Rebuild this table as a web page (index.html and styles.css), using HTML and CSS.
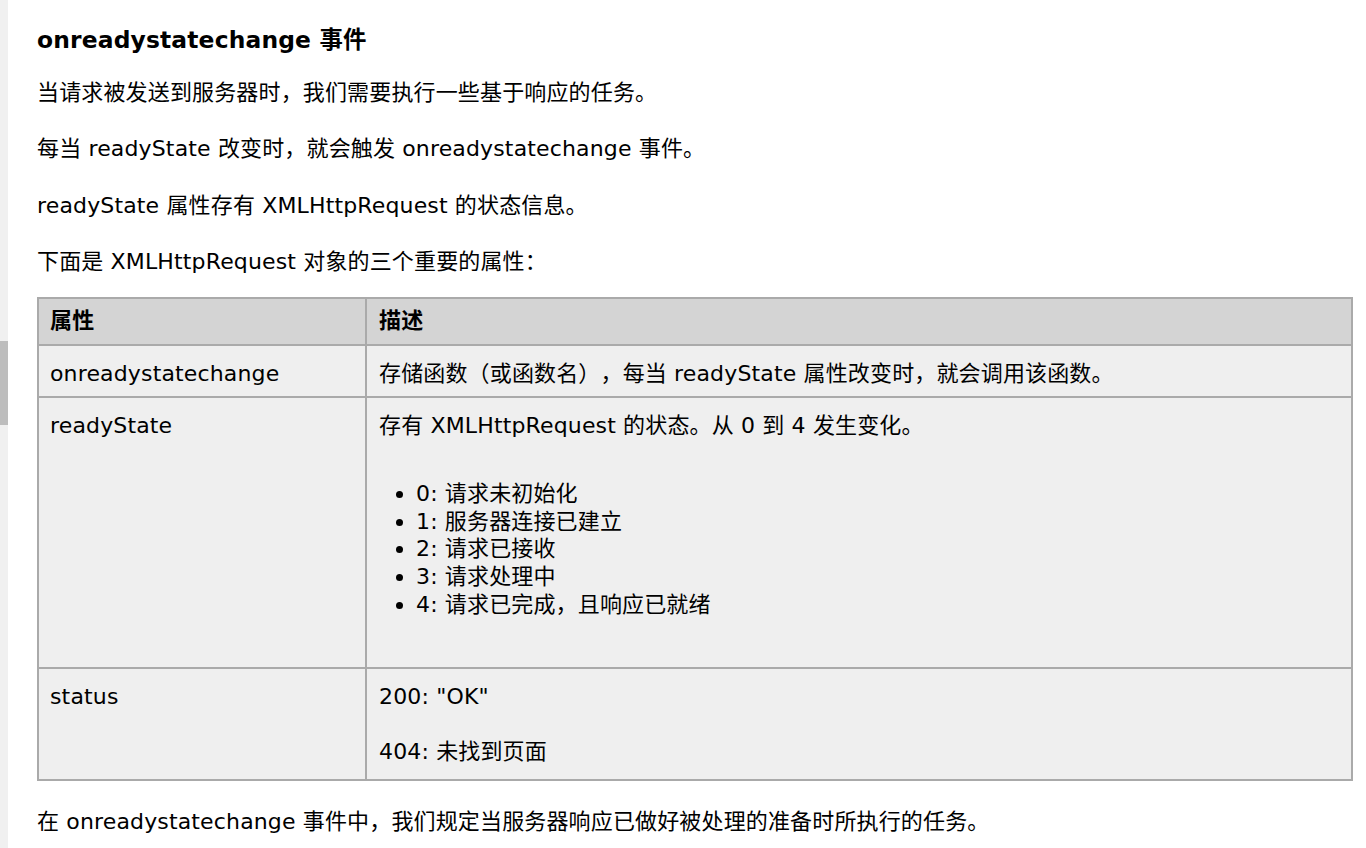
FILE: index.html
```html
<!DOCTYPE html>
<html lang="zh-CN">
<head>
<meta charset="utf-8">
<title>onreadystatechange 事件</title>
<link rel="stylesheet" href="styles.css">
</head>
<body>
<div class="page">
  <div class="rail"><div class="thumb"></div></div>
  <main class="content">
    <h2 class="title">onreadystatechange 事件</h2>
    <p class="para">当请求被发送到服务器时，我们需要执行一些基于响应的任务。</p>
    <p class="para">每当 readyState 改变时，就会触发 onreadystatechange 事件。</p>
    <p class="para">readyState 属性存有 XMLHttpRequest 的状态信息。</p>
    <p class="para last">下面是 XMLHttpRequest 对象的三个重要的属性：</p>
    <table class="ref">
      <colgroup><col class="c1"><col class="c2"></colgroup>
      <tr>
        <th class="first">属性</th>
        <th class="second">描述</th>
      </tr>
      <tr>
        <td class="first">onreadystatechange</td>
        <td class="second">存储函数（或函数名），每当 readyState 属性改变时，就会调用该函数。</td>
      </tr>
      <tr>
        <td class="first">readyState</td>
        <td class="second">
          <p class="cellp">存有 XMLHttpRequest 的状态。从 0 到 4 发生变化。</p>
          <ul class="states">
            <li>0: 请求未初始化</li>
            <li>1: 服务器连接已建立</li>
            <li>2: 请求已接收</li>
            <li>3: 请求处理中</li>
            <li>4: 请求已完成，且响应已就绪</li>
          </ul>
        </td>
      </tr>
      <tr>
        <td class="first">status</td>
        <td class="second">
          <p class="cellp">200: "OK"</p>
          <p class="cellp second-p">404: 未找到页面</p>
        </td>
      </tr>
    </table>
    <p class="para after">在 onreadystatechange 事件中，我们规定当服务器响应已做好被处理的准备时所执行的任务。</p>
  </main>
</div>
</body>
</html>
```
FILE: styles.css
```css
html, body {
  margin: 0;
  padding: 0;
  background: #ffffff;
}

body {
  font-family: "DejaVu Sans", "Noto Sans CJK SC", sans-serif;
  font-size: 22px;
  line-height: 28px;
  letter-spacing: 0.15px;
  color: #000000;
  text-spacing-trim: space-all;
  font-feature-settings: "halt" 0;
}

.page {
  display: flex;
  min-height: 848px;
}

.rail {
  width: 8px;
  flex: 0 0 8px;
  background: #f0f0f0;
}

.thumb {
  margin-top: 341px;
  height: 84px;
  background: #bdbdbd;
}

.content {
  padding: 26px 0 0 29px;
  width: 1316px;
}

.title {
  margin: 0 0 25px 0;
  font-size: 23.4px;
  line-height: 28px;
  font-weight: bold;
}

.para {
  margin: 0 0 28.3px 0;
}

.para.last {
  margin-bottom: 21px;
}

.para.after {
  margin-top: 27px;
}

.ref {
  width: 1316px;
  table-layout: fixed;
  border-collapse: separate;
  border-spacing: 0;
  border: 2px solid #aaaaaa;
}

.c1 {
  width: 326px;
}

.ref th,
.ref td {
  text-align: left;
  vertical-align: top;
  padding: 14px 12px 8px 12px;
  background: #efefef;
  border-top: 2px solid #aaaaaa;
}

.ref th {
  background: #d4d4d4;
  font-weight: bold;
  padding: 8px 12px 9px 12px;
  border-top: none;
}

.ref th.first,
.ref td.first {
  padding-left: 11px;
}

.ref .second {
  border-left: 2px solid #aaaaaa;
}

.cellp {
  margin: 0;
}

.cellp.second-p {
  margin-top: 27px;
  margin-bottom: 5px;
}

.states {
  margin: 40px 0 40px 0;
  padding-left: 37px;
  line-height: 27.75px;
}
```
